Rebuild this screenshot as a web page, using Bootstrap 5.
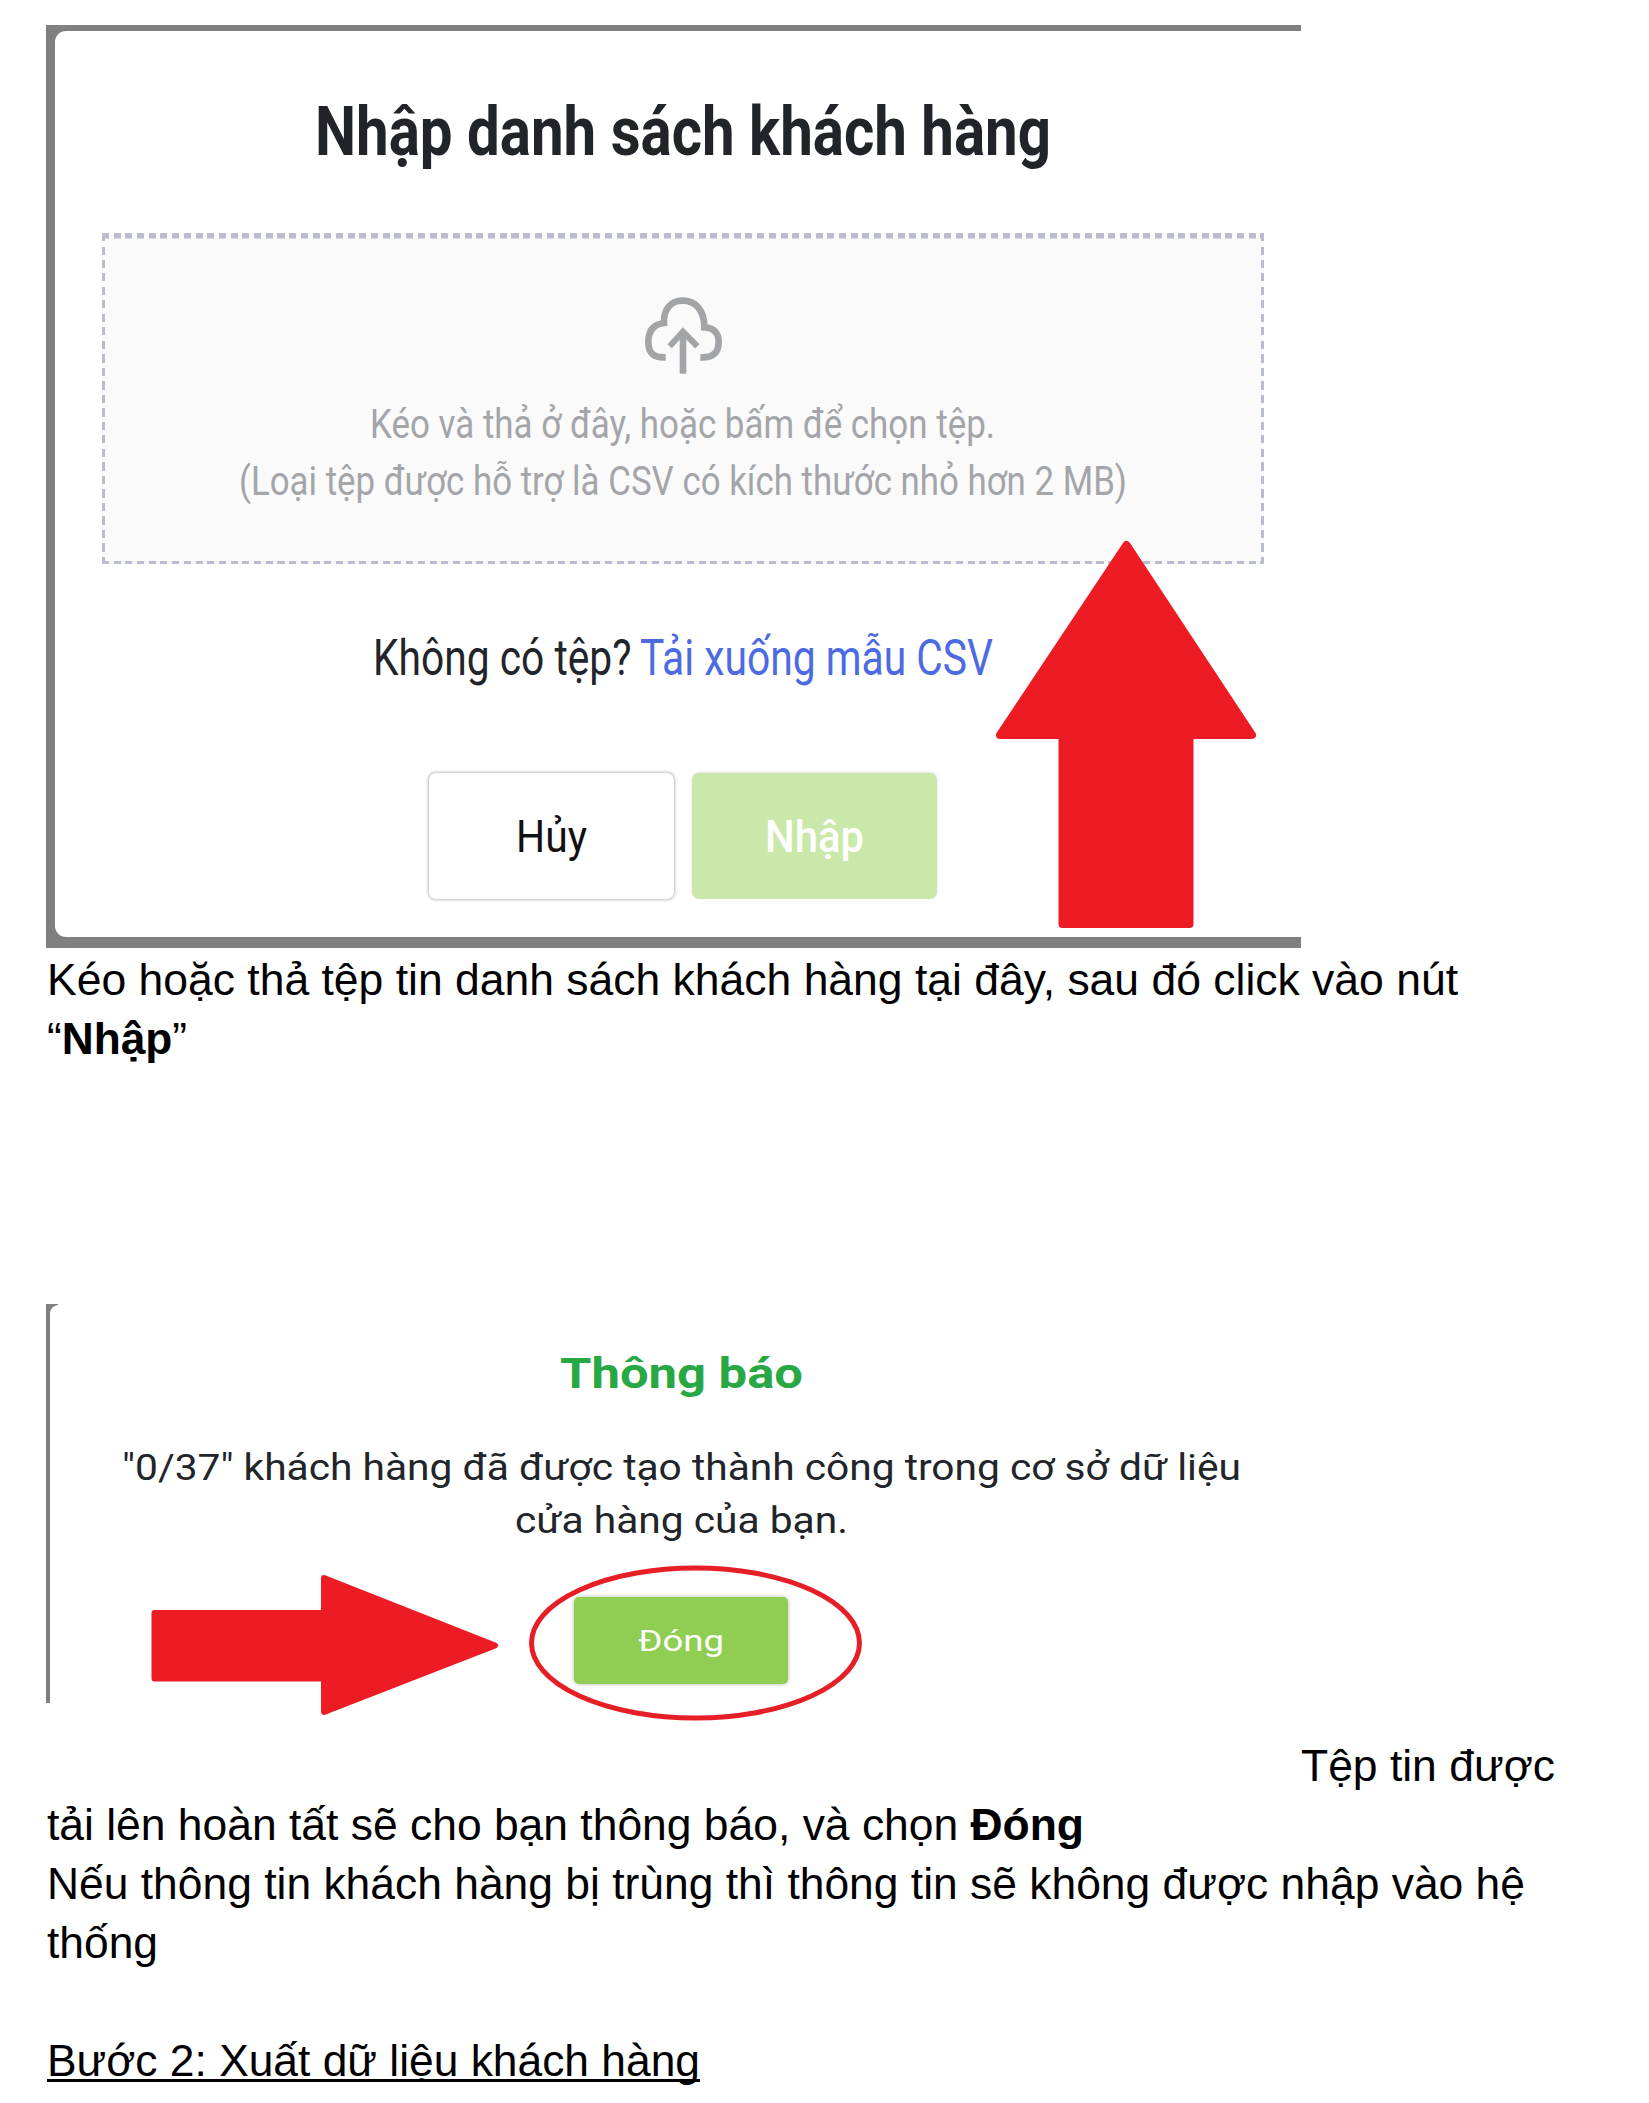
<!DOCTYPE html>
<html lang="vi">
<head>
<meta charset="utf-8">
<meta name="viewport" content="width=device-width, initial-scale=1">
<title>Nhập danh sách khách hàng</title>
<link href="https://cdn.jsdelivr.net/npm/bootstrap@5.3.0/dist/css/bootstrap.min.css" rel="stylesheet">
<style>
  body { background: #fff; color: #000; font-family: "Liberation Sans", Arial, sans-serif; overflow: hidden; }
  .doc { padding: 25px 0 0 46px; height: 2103px; }
  .doc-line { font-size: 44px; line-height: 59px; height: 59px; white-space: nowrap; padding-left: 1px; }
  .doc-line u { text-decoration-thickness: 3px; text-underline-offset: 3px; text-decoration-skip-ink: none; }
  .first-lines { margin-top: 2px; }
  .line-aside { width: 1509px; }
  .line-step { margin-top: 59px; }
  .fit { display: inline-block; white-space: nowrap; transform-origin: left center; }
  .shot { font-family: Roboto, sans-serif; color: #212529; width: 1255px; }

  /* import dialog */
  .shot-import { height: 923px; background: #808080; padding: 5.5px 0 11px 8.5px; }
  .dialog-pane { height: 100%; background: #fff; border-radius: 11px 0 0 11px; padding: 61px 37px 0 47px; }
  .dialog-title { font-size: 68px; line-height: 80px; font-weight: 700; }
  .drop-zone {
    --dash: #b9bccd;
    margin-top: 61px; height: 331.5px; padding-top: 47px; color: #a3a5a9;
    background:
      repeating-linear-gradient(90deg, var(--dash) 0 7px, transparent 7px 11.7px) top / 100% 5.5px no-repeat,
      repeating-linear-gradient(90deg, var(--dash) 0 7px, transparent 7px 11.7px) bottom / 100% 3.5px no-repeat,
      repeating-linear-gradient(180deg, var(--dash) 0 8px, transparent 8px 13.5px) left / 3px 100% no-repeat,
      repeating-linear-gradient(180deg, var(--dash) 0 8px, transparent 8px 13.5px) right / 3px 100% no-repeat,
      #fafafa;
  }
  .drop-zone svg { width: 160px; height: 110px; margin-bottom: 6px; }
  .drop-text { font-size: 40px; line-height: 57px; height: 57px; }
  .ask { font-size: 50.5px; line-height: 60px; margin-top: 64px; gap: 8px; }
  .ask a { color: #4c6ae2; }
  .actions { margin-top: 85px; gap: 17.5px; }
  .actions .btn { width: 245px; height: 126px; border-radius: 7px; border: 0; font-size: 45px; padding: 0; line-height: 128px; }
  .btn-cancel, .btn-cancel:hover { background: #fff; color: #111; box-shadow: 0 0 3px 1px rgba(0,0,0,.27); }
  .btn-import { background: #c9e8a9; color: #fff; font-weight: 500; box-shadow: 0 -1px 3px rgba(0,0,0,.12); }
  .mark-up { left: 945.5px; top: 511.5px; }

  /* result dialog */
  .shot-result { height: 432px; margin-top: 236px; padding: 44px 0 0 15px; }
  .result-edge { left: 0; top: 0; }
  .result-title { font-size: 43px; line-height: 50px; height: 50px; font-weight: 700; color: #28a745; }
  .result-text { font-size: 36.5px; line-height: 53px; height: 53px; }
  .result-body { margin-top: 43px; }
  .btn-close-result { width: 213.5px; height: 87px; margin-top: 50px; border: 0; border-radius: 5px; padding: 0; background: #8fce52; color: #fff; font-size: 29.5px; font-weight: 400; line-height: 86px; box-shadow: 0 0 4px rgba(0,0,0,.3); }
  .mark-right { left: 99.5px; top: 257px; }
</style>
</head>
<body>
<main class="doc">

  <section class="shot shot-import position-relative">
    <div class="dialog-pane text-center">
      <h1 class="dialog-title mb-0"><span class="fit" data-w="736">Nhập danh sách khách hàng</span></h1>
      <div class="drop-zone">
        <svg class="d-block mx-auto" viewBox="7 0 480 330" fill="none" stroke="#a2a4a8" stroke-width="20" aria-hidden="true">
          <path d="M195 232C162 234 143 222 143 186C143 150 160 133 190 129C188 90 209 62 245 62C285 62 311 90 311 142C340 143 354 160 354 185C354 220 335 234 299 232"/>
          <path d="M247 281V155"/>
          <path d="M207 199L247 155L290 199" stroke-width="18"/>
        </svg>
        <div class="drop-text"><span class="fit" data-w="625">Kéo và thả ở đây, hoặc bấm để chọn tệp.</span></div>
        <div class="drop-text"><span class="fit" data-w="888">(Loại tệp được hỗ trợ là CSV có kích thước nhỏ hơn 2 MB)</span></div>
      </div>
      <div class="ask d-flex justify-content-center">
        <span class="fit" data-w="258.5">Không có tệp?</span>
        <a href="#" class="text-decoration-none"><span class="fit" data-w="353">Tải xuống mẫu CSV</span></a>
      </div>
      <div class="actions d-flex justify-content-center">
        <button type="button" class="btn btn-cancel"><span class="fit" data-w="71">Hủy</span></button>
        <button type="button" class="btn btn-import"><span class="fit" data-w="99">Nhập</span></button>
      </div>
    </div>
    <svg class="mark-up position-absolute" width="268" height="396" viewBox="0 0 268 396" fill="#ed1c24" stroke="#ed1c24" stroke-width="8" stroke-linejoin="round" aria-hidden="true">
      <path d="M134.500 8L260 198H197.500V387H70.500V198H8Z"/>
    </svg>
  </section>

  <div class="first-lines">
    <div class="doc-line"><span class="fit" data-w="1411">Kéo hoặc thả tệp tin danh sách khách hàng tại đây, sau đó click vào nút</span></div>
    <div class="doc-line"><span class="fit" data-w="140">“<b>Nhập</b>”</span></div>
  </div>

  <section class="shot shot-result position-relative text-center">
    <svg class="result-edge position-absolute" width="12" height="400" viewBox="0 0 12 400" aria-hidden="true">
      <path d="M0 0H12V1C7 2 5 4 4 9V399H0Z" fill="#808080"/>
    </svg>
    <div class="result-title"><span class="fit" data-w="243">Thông báo</span></div>
    <div class="result-body">
      <div class="result-text"><span class="fit" data-w="1119">"0/37" khách hàng đã được tạo thành công trong cơ sở dữ liệu</span></div>
      <div class="result-text"><span class="fit" data-w="333">cửa hàng của bạn.</span></div>
    </div>
    <button type="button" class="btn btn-close-result"><span class="fit" data-w="86">Đóng</span></button>
    <svg class="mark-right position-absolute" width="730" height="168" viewBox="0 0 730 168" aria-hidden="true">
      <path d="M8.500 52H178V17L349 84.500L178 151V117.500H8.500Z" fill="#ed1c24" stroke="#ed1c24" stroke-width="6" stroke-linejoin="round"/>
      <ellipse cx="549.500" cy="82" rx="164" ry="75" fill="none" stroke="#e61e26" stroke-width="5"/>
    </svg>
  </section>

  <div class="doc-line line-aside text-end"><span class="fit" data-w="254">Tệp tin được</span></div>
  <div class="doc-line"><span class="fit" data-w="1037">tải lên hoàn tất sẽ cho bạn thông báo, và chọn <b>Đóng</b></span></div>
  <div class="doc-line"><span class="fit" data-w="1478">Nếu thông tin khách hàng bị trùng thì thông tin sẽ không được nhập vào hệ</span></div>
  <div class="doc-line"><span class="fit" data-w="111">thống</span></div>
  <div class="doc-line line-step"><span class="fit" data-w="653"><u>Bước 2: Xuất dữ liệu khách hàng</u></span></div>
</main>

<script src="https://cdn.jsdelivr.net/npm/bootstrap@5.3.0/dist/js/bootstrap.bundle.min.js"></script>
<script>
  // Condense or widen each line to its set width, keeping the letter height.
  document.querySelectorAll('.fit').forEach(function (el) {
    var natural = el.getBoundingClientRect().width, wanted = +el.dataset.w;
    el.style.transform = 'scaleX(' + wanted / natural + ')';
    el.style.marginRight = (wanted - natural) + 'px';
  });
</script>
</body>
</html>
